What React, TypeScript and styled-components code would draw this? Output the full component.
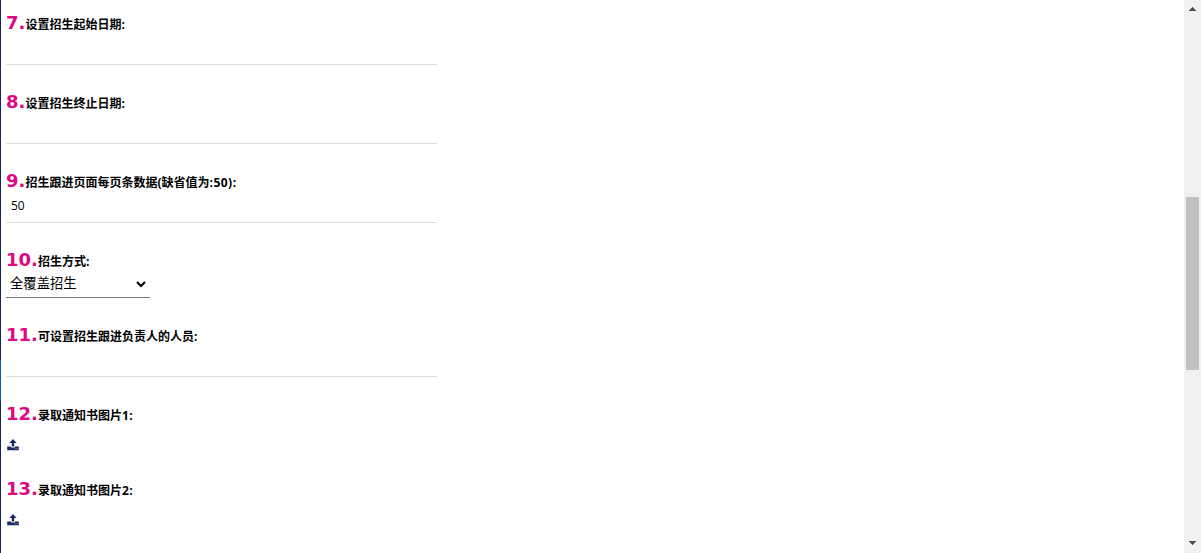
import * as React from "react"
import styled, { createGlobalStyle } from "styled-components"

interface FieldProps {
  index: number
  label: string
  suffix?: string
  children: React.ReactNode
}

const Field = ({ index, label, suffix, children }: FieldProps) => (
  <FieldWrapper>
    <FieldTitle>
      <FieldIndex>{index}.</FieldIndex>
      <FieldLabel>
        {label}
        {suffix && <FieldSuffix>{suffix}</FieldSuffix>}
      </FieldLabel>
    </FieldTitle>
    {children}
  </FieldWrapper>
)

const UploadIcon = () => (
  <svg width="12" height="12" viewBox="0 0 12 12" fill="#1a2a5e">
    <path d="M6 0L9.6 4H7.2V7.4H4.8V4H2.4z" />
    <path d="M0.2 7.6H4V8.5H8V7.6H11.8V11.2H0.2z" />
    <path d="M7.7 9.4H10.8V10.1H7.7z" fill="#8088a8" />
  </svg>
)

const App = () => {
  const [pageSize, setPageSize] = React.useState("50")

  return (
    <React.Fragment>
      <GlobalStyle />
      <Page>
        <SideEdge>
          <SideEdgeActive />
        </SideEdge>
        <Form>
          <Field index={7} label="设置招生起始日期:">
            <TextInput />
          </Field>
          <Field index={8} label="设置招生终止日期:">
            <TextInput />
          </Field>
          <Field index={9} label="招生跟进页面每页条数据(缺省值为" suffix=":50):">
            <TextInput
              value={pageSize}
              onChange={event => setPageSize(event.target.value)}
            />
          </Field>
          <Field index={10} label="招生方式:">
            <SelectWrapper>
              <Select>
                <option>全覆盖招生</option>
              </Select>
            </SelectWrapper>
          </Field>
          <Field index={11} label="可设置招生跟进负责人的人员:">
            <TextInput />
          </Field>
          <Field index={12} label="录取通知书图片" suffix="1:">
            <UploadButton>
              <UploadIcon />
            </UploadButton>
          </Field>
          <Field index={13} label="录取通知书图片" suffix="2:">
            <UploadButton>
              <UploadIcon />
            </UploadButton>
          </Field>
        </Form>
        <Scrollbar>
          <ScrollArrow>
            <path d="M3 0h1v1h1v1h1v1h1v1H0V3h1V2h1V1h1z" />
          </ScrollArrow>
          <ScrollTrack>
            <ScrollThumb />
          </ScrollTrack>
          <ScrollArrow>
            <path d="M0 0h7v1H6v1H5v1H4v1H3V3H2V2H1V1H0z" />
          </ScrollArrow>
        </Scrollbar>
      </Page>
    </React.Fragment>
  )
}

const GlobalStyle = createGlobalStyle`
  * {
    box-sizing: border-box;
  }

  body {
    margin: 0;
    overflow: hidden;
    background: #fff;
    color: #000;
    font-family: "Open Sans", "Noto Sans CJK SC", sans-serif;
    font-size: 12px;
  }
`

const Page = styled.div`
  display: flex;
  height: 553px;
`

const SideEdge = styled.div`
  width: 1px;
  padding-top: 360px;
  background: #17235c;
`

const SideEdgeActive = styled.div`
  height: 41px;
  background: #0e5c9e;
`

const Form = styled.form`
  flex: 1;
  padding: 12px 5px 0;
`

const FieldWrapper = styled.div`
  display: flex;
  flex-direction: column;
  align-items: flex-start;
  margin-bottom: 26px;
`

const FieldTitle = styled.div`
  display: flex;
  align-items: baseline;
  height: 22px;
  line-height: 22px;
  font-weight: 700;
  white-space: nowrap;
`

const FieldIndex = styled.span`
  color: #df0781;
  font-family: "DejaVu Sans", sans-serif;
  font-size: 18px;
`

const FieldLabel = styled.span`
  font-size: 12px;
`

const FieldSuffix = styled.span`
  letter-spacing: 0.5px;
`

const TextInput = styled.input`
  width: 431px;
  height: 31px;
  padding: 0 5px 4px;
  border: 0;
  border-bottom: 1px solid #ddd;
  outline: none;
  background: transparent;
  color: #000;
  font-family: inherit;
  font-size: 12px;
`

const SelectWrapper = styled.div`
  display: flex;
  width: 144px;
  height: 27px;
  border-bottom: 1px solid #767676;
`

const Select = styled.select`
  width: 143px;
  height: 26px;
  padding: 0 0 3px;
  border: 0;
  border-radius: 0;
  outline: none;
  background-color: transparent;
  color: #000;
  font-family: inherit;
  font-size: 13.333px;
`

const UploadButton = styled.button`
  display: flex;
  height: 27px;
  padding: 14px 2px 0 1px;
  border: 0;
  background: transparent;
`

const Scrollbar = styled.div`
  display: flex;
  flex-direction: column;
  align-items: center;
  width: 17px;
  padding: 7px 0 8px;
  background: #f0f0f0;
`

const ScrollArrow = styled.svg.attrs({ viewBox: "0 0 7 4" })`
  width: 7px;
  height: 4px;
  fill: #505050;
  shape-rendering: crispEdges;
`

const ScrollTrack = styled.div`
  flex: 1;
  padding-top: 186px;
`

const ScrollThumb = styled.div`
  width: 13px;
  height: 173px;
  background: #c1c1c1;
`

export default App
